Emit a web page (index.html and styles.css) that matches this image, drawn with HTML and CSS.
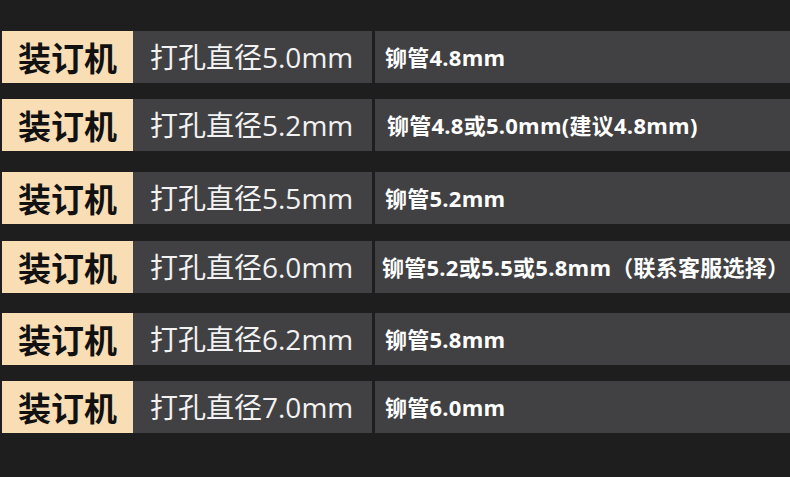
FILE: index.html
```html
<!DOCTYPE html>
<html lang="zh-CN">
<head>
<meta charset="UTF-8" />
<title>装订机 铆管对照</title>
<link rel="stylesheet" href="styles.css">
</head>
<body>
  <div class="tabel">
    <div class="wiersz r1">
      <div class="etykieta">装订机</div>
      <div class="otwor">打孔直径5.0mm</div>
      <div class="rurka">铆管4.8mm</div>
    </div>
    <div class="wiersz r2">
      <div class="etykieta">装订机</div>
      <div class="otwor">打孔直径5.2mm</div>
      <div class="rurka">铆管4.8或5.0mm(建议4.8mm)</div>
    </div>
    <div class="wiersz r3">
      <div class="etykieta">装订机</div>
      <div class="otwor">打孔直径5.5mm</div>
      <div class="rurka">铆管5.2mm</div>
    </div>
    <div class="wiersz r4">
      <div class="etykieta">装订机</div>
      <div class="otwor">打孔直径6.0mm</div>
      <div class="rurka dluga">铆管5.2或5.5或5.8mm（联系客服选择）</div>
    </div>
    <div class="wiersz r5">
      <div class="etykieta">装订机</div>
      <div class="otwor">打孔直径6.2mm</div>
      <div class="rurka">铆管5.8mm</div>
    </div>
    <div class="wiersz r6">
      <div class="etykieta">装订机</div>
      <div class="otwor">打孔直径7.0mm</div>
      <div class="rurka">铆管6.0mm</div>
    </div>
  </div>
</body>
</html>
```

FILE: styles.css
```css
html, body {
  margin: 0;
  padding: 0;
}
body {
  background: #1e1e1e;
  font-family: "Noto Sans CJK SC", "Noto Sans", sans-serif;
  width: 790px;
  height: 477px;
  overflow: hidden;
}
.tabel {
  padding: 31px 0 0 2px;
  display: flex;
  flex-direction: column;
}
.wiersz {
  display: flex;
  height: 52px;
}
.r2 { margin-top: 16px; }
.r3 { margin-top: 21px; }
.r4 { margin-top: 17px; }
.r5 { margin-top: 20px; }
.r6 { margin-top: 16px; }
.etykieta {
  width: 131px;
  background: #f8ddb5;
  color: #111;
  font-weight: bold;
  font-size: 33px;
  display: flex;
  align-items: center;
  justify-content: center;
  line-height: 1;
}
.otwor {
  width: 222px;
  padding-left: 17px;
  background: #414143;
  color: #f2f2f2;
  font-family: "Open Sans", "Noto Sans CJK SC", sans-serif;
  font-size: 28px;
  display: flex;
  align-items: center;
  line-height: 1;
  white-space: nowrap;
}
.rurka {
  flex: 1;
  margin-left: 3px;
  padding-left: 10px;
  background: #414143;
  color: #fff;
  font-family: "Open Sans", "Noto Sans CJK SC", sans-serif;
  font-weight: bold;
  font-size: 22px;
  letter-spacing: 0.25px;
  display: flex;
  align-items: center;
  line-height: 1;
  white-space: nowrap;
  overflow: hidden;
}
.r2 .rurka { padding-left: 12px; }
.rurka.dluga {
  padding-left: 7px;
}
```
